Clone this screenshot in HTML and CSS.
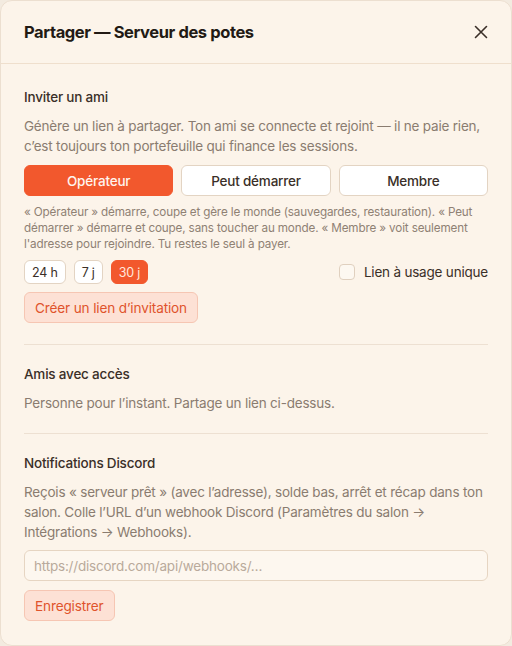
FILE: index.html
```html
<!DOCTYPE html>
<html lang="fr">
<head>
<meta charset="utf-8">
<title>Partager — Serveur des potes</title>
<link rel="stylesheet" href="styles.css">
</head>
<body>
<div class="dialog">
  <header class="dlg-head">
    <h1 class="dlg-title">Partager — Serveur des potes</h1>
    <button class="close" aria-label="Fermer">
      <svg width="14" height="14" viewBox="0 0 14 14"><path d="M1.5 1.5 L12.5 12.5 M12.5 1.5 L1.5 12.5" stroke="#3a2f28" stroke-width="1.6" stroke-linecap="round" fill="none"/></svg>
    </button>
  </header>
  <div class="dlg-body">
    <section class="sec sec-first">
      <h2 class="sec-title">Inviter un ami</h2>
      <p class="desc">Génère un lien à partager. Ton ami se connecte et rejoint — il ne paie rien, c’est toujours ton portefeuille qui finance les sessions.</p>
      <div class="roles">
        <button class="role active">Opérateur</button>
        <button class="role">Peut démarrer</button>
        <button class="role">Membre</button>
      </div>
      <p class="help">« Opérateur » démarre, coupe et gère le monde (sauvegardes, restauration). « Peut démarrer » démarre et coupe, sans toucher au monde. « Membre » voit seulement l'adresse pour rejoindre. Tu restes le seul à payer.</p>
      <div class="opts">
        <div class="chips">
          <button class="chip">24 h</button>
          <button class="chip">7 j</button>
          <button class="chip active">30 j</button>
        </div>
        <label class="single"><span class="box"></span>Lien à usage unique</label>
      </div>
      <div><button class="soft">Créer un lien d’invitation</button></div>
    </section>
    <section class="sec sec-mid">
      <h2 class="sec-title">Amis avec accès</h2>
      <p class="desc">Personne pour l’instant. Partage un lien ci-dessus.</p>
    </section>
    <section class="sec sec-last">
      <h2 class="sec-title">Notifications Discord</h2>
      <p class="desc">Reçois « serveur prêt » (avec l’adresse), solde bas, arrêt et récap dans ton salon. Colle l’URL d’un webhook Discord (Paramètres du salon → Intégrations → Webhooks).</p>
      <input class="field" type="text" placeholder="https://discord.com/api/webhooks/…">
      <div><button class="soft">Enregistrer</button></div>
    </section>
  </div>
</div>
</body>
</html>
```
FILE: styles.css
```css
* { box-sizing: border-box; }
html, body { margin: 0; padding: 0; }
body {
  background: #f3ebe0;
  font-family: "Inter", "Noto Sans", sans-serif;
  color: #3a2f28;
  letter-spacing: -0.2px;
}
.dialog {
  width: 512px;
  height: 646px;
  background: #fcf4ea;
  border: 1px solid #ecdfd0;
  border-radius: 12px;
  overflow: hidden;
}
.dlg-head {
  height: 63px;
  display: flex;
  align-items: center;
  justify-content: space-between;
  padding: 0 23px 0 23px;
  border-bottom: 1px solid #efdfcd;
}
.dlg-title {
  margin: 0;
  font-size: 16.5px;
  font-weight: 700;
  color: #221a14;
  letter-spacing: -0.4px;
}
.close {
  border: 0;
  background: none;
  padding: 0;
  width: 14px;
  height: 14px;
  display: flex;
}
.dlg-body { padding: 0 23px; }
.sec {
  display: flex;
  flex-direction: column;
  gap: 8px;
  padding: 19px 0 21px;
  border-bottom: 1px solid #ede0d2;
}
.sec-first { padding-top: 23px; }
.sec-mid { padding-bottom: 20px; }
.sec-last { border-bottom: 0; }
.sec-last .field + div { margin-top: 1px; }
.sec-title {
  margin: 0 0 1px;
  font-size: 13.5px;
  line-height: 20px;
  font-weight: 500;
  color: #3a2f28;
}
.desc {
  margin: 0;
  font-size: 13.5px;
  line-height: 20px;
  color: #8a7c70;
}
.roles {
  display: grid;
  grid-template-columns: 1fr 1fr 1fr;
  gap: 8px;
  margin-top: 1px;
}
.role {
  height: 31px;
  border: 1px solid #e3d4c3;
  border-radius: 6px;
  background: #ffffff;
  font-family: inherit;
  font-size: 13.5px;
  font-weight: 500;
  letter-spacing: -0.2px;
  color: #3a2f28;
}
.role.active {
  background: #f2582d;
  border-color: #f2582d;
  color: #fff4ee;
}
.help {
  margin: 0;
  font-size: 11.7px;
  line-height: 16px;
  letter-spacing: -0.15px;
  color: #8f8174;
}
.opts {
  display: flex;
  align-items: center;
  justify-content: space-between;
}
.chips { display: flex; gap: 8px; }
.chip {
  height: 24px;
  padding: 0 7px;
  border: 1px solid #e3d4c3;
  border-radius: 6px;
  background: #ffffff;
  font-family: inherit;
  font-size: 12.5px;
  letter-spacing: -0.2px;
  color: #3a2f28;
}
.chip.active {
  background: #f2582d;
  border-color: #f2582d;
  color: #ffe7dc;
}
.single {
  display: flex;
  align-items: center;
  gap: 9px;
  font-size: 13.5px;
  color: #3a2f28;
}
.box {
  width: 16px;
  height: 16px;
  border: 1.5px solid #e0d0bf;
  border-radius: 4px;
  background: #fdf8f1;
}
.soft {
  height: 31px;
  padding: 0 10px;
  border: 1px solid #f6c6b3;
  border-radius: 6px;
  background: #fde1d5;
  font-family: inherit;
  font-size: 13.6px;
  letter-spacing: -0.15px;
  color: #e0532c;
}
.field {
  height: 31px;
  width: 100%;
  padding: 0 9px;
  border: 1px solid #e6d5c2;
  border-radius: 6px;
  background: #fdf7ef;
  font-family: inherit;
  font-size: 13.5px;
  letter-spacing: -0.2px;
  color: #3a2f28;
}
.field::placeholder { color: #b9aa9b; }
```
